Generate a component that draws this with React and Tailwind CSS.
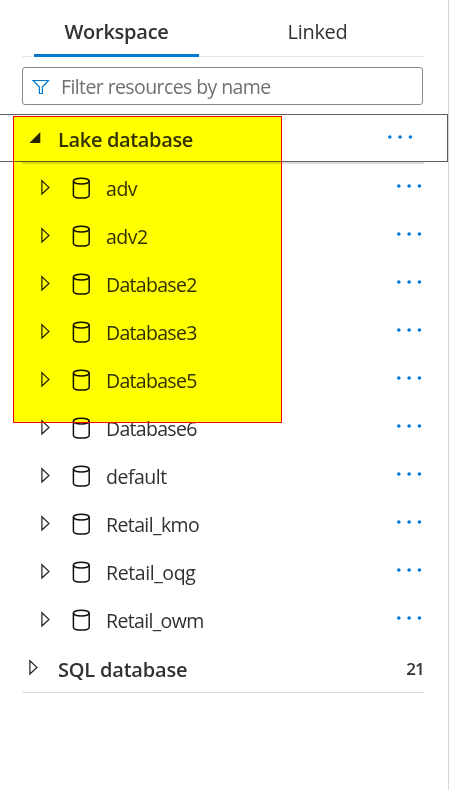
const databases = [
  { name: 'adv', tracking: 'tracking-[-0.45px]' },
  { name: 'adv2', tracking: 'tracking-[-0.5px]' },
  { name: 'Database2', tracking: 'tracking-[-0.7px]' },
  { name: 'Database3', tracking: 'tracking-[-0.7px]' },
  { name: 'Database5', tracking: 'tracking-[-0.7px]' },
  { name: 'Database6', tracking: 'tracking-[-0.7px]' },
  { name: 'default', tracking: 'tracking-[-0.5px]' },
  { name: 'Retail_kmo', tracking: 'tracking-[-0.6px]' },
  { name: 'Retail_oqg', tracking: 'tracking-[-0.4px]' },
  { name: 'Retail_owm', tracking: 'tracking-[-0.65px]' },
];

function FilterIcon() {
  return (
    <svg width="18" height="16" viewBox="0 0 18 16" fill="none" stroke="#0078d4" strokeWidth="1.2" className="shrink-0">
      <path d="M1 1.5H16.4L10.4 8V14.5H7.4V8Z" />
    </svg>
  );
}

function CollapsedArrow() {
  return (
    <svg width="10" height="17" viewBox="0 0 10 17" fill="none" stroke="#252424" strokeWidth="1.25" className="shrink-0">
      <path d="M1.9 1.8V15L8.9 8.4Z" />
    </svg>
  );
}

function ExpandedArrow() {
  return (
    <svg width="12" height="12" viewBox="0 0 12 12" className="shrink-0">
      <path d="M11.3 0V11H0.3Z" fill="#252424" />
    </svg>
  );
}

function DatabaseIcon() {
  return (
    <svg width="18" height="22" viewBox="0 0 18 22" fill="none" stroke="#111" strokeWidth="1.5" className="shrink-0">
      <ellipse cx="9.3" cy="4.1" rx="7.9" ry="2.9" />
      <path d="M1.4 4.1V18.2C1.4 20 4.8 21.1 9.3 21.1S17.2 20 17.2 18.2V4.1" />
    </svg>
  );
}

function MoreDots() {
  return (
    <svg width="26" height="4" viewBox="0 0 26 4" fill="#0078d4" className="shrink-0">
      <circle cx="2.8" cy="2" r="1.8" />
      <circle cx="13.1" cy="2" r="1.8" />
      <circle cx="23.4" cy="2" r="1.8" />
    </svg>
  );
}

export default function App() {
  return (
    <div className="h-[790px] w-[475px] overflow-hidden bg-white font-['Open_Sans','Noto_Sans',sans-serif] text-[#323130]">
      <div className="relative h-full w-[449px] border-r border-[#d8d8d8]">
        {/* Tabs */}
        <div className="ml-[22px] flex h-[57px] w-[402px] border-b border-[#e6e6e6] pl-3">
          <div className="h-[57px] w-[165px] border-b-3 border-[#0078d4] pt-[17px] text-center text-[20px] leading-[30px] font-[560] tracking-[-0.25px]">
            Workspace
          </div>
          <div className="ml-[36px] w-[165px] pt-[17px] text-center text-[20px] leading-[30px] tracking-[-0.3px]">
            Linked
          </div>
        </div>

        {/* Filter box */}
        <div className="mt-[10px] ml-[22px] flex h-[38px] w-[401px] items-center rounded-[3px] border border-[#8a8886] pl-[9px]">
          <span className="mt-[2px]">
            <FilterIcon />
          </span>
          <span className="mt-[2px] ml-[11px] text-[19.5px] leading-[30px] tracking-[-0.6px] whitespace-nowrap text-[#717070]">
            Filter resources by name
          </span>
        </div>

        {/* Lake database header */}
        <div className="mt-[9px] flex h-12 w-[448px] items-center border border-l-0 border-[#605e5c] pr-[34px] pl-[29px]">
          <ExpandedArrow />
          <span className="mt-[3px] ml-[17px] flex-1 text-[20px] leading-[30px] font-[560] tracking-[-0.35px]">Lake database</span>
          <span className="mb-[2px]">
            <MoreDots />
          </span>
        </div>
        <div className="ml-[22px] h-[2px] w-[402px] bg-[#dcdcdc]" />

        {databases.map((db) => (
          <div key={db.name} className="flex h-12 items-center pr-[26px] pl-10">
            <span className="mb-[2px]">
              <CollapsedArrow />
            </span>
            <span className="ml-[22px]">
              <DatabaseIcon />
            </span>
            <span className={`mt-[2px] ml-[16px] flex-1 text-[19.5px] leading-[30px] ${db.tracking}`}>{db.name}</span>
            <span className="mb-[4px]">
              <MoreDots />
            </span>
          </div>
        ))}

        {/* SQL database header */}
        <div className="ml-[22px] flex h-[49px] w-[402px] items-center border-b border-[#dcdcdc] pl-[6px]">
          <span className="mb-[2px]">
            <CollapsedArrow />
          </span>
          <span className="mt-[4px] ml-5 flex-1 text-[20px] leading-[30px] font-[560] tracking-[-0.2px]">SQL database</span>
          <span className="mt-[1px] text-[17px] font-[560] tracking-[-0.8px]">21</span>
        </div>

        {/* Highlight laid over the tree */}
        <div className="absolute top-[116px] left-[13px] h-[307px] w-[269px] bg-[#ffff00] mix-blend-multiply" />
        <div className="absolute top-[116px] left-[13px] h-[307px] w-[269px] border border-[#ff0000]" />
      </div>
    </div>
  );
}
